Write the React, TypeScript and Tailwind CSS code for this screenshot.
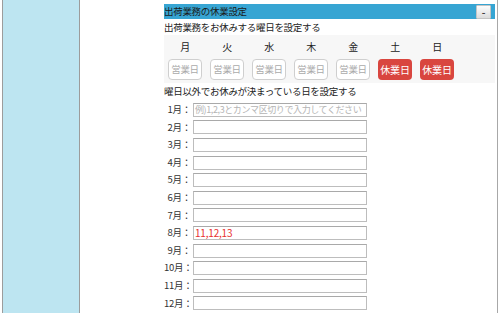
import React from 'react';

const days = ['月', '火', '水', '木', '金', '土', '日'];
const closed = [false, false, false, false, false, true, true];
const months = ['1月', '2月', '3月', '4月', '5月', '6月', '7月', '8月', '9月', '10月', '11月', '12月'];
const values: Record<string, string> = { '8月': '11,12,13' };

export default function App() {
  return (
    <div className="flex h-[313px] w-[500px] overflow-hidden bg-white font-['Noto_Sans_CJK_JP','Noto_Sans_CJK_SC',sans-serif] text-[9.5px] tracking-[-0.3px] text-[#333]">
      {/* left nav column */}
      <div className="ml-[2px] w-[78px] shrink-0 border-x border-[#9c9c9c] bg-[#bde5f1]" />

      <div className="ml-[84px] w-[334px] shrink-0 border-r border-[#a8a8a8] pr-[2px]">
        {/* panel header */}
        <div className="mt-[4px] flex h-[15px] items-center justify-between bg-[#37a5d3] pr-[4px]">
          <span className="whitespace-nowrap leading-[15px] text-[#1a1a1a]">出荷業務の休業設定</span>
          <button className="flex h-[14px] w-[15px] items-center justify-center rounded-[1px] border border-[#c4c4c4] bg-gradient-to-b from-[#fdfdfd] to-[#dcdcdc] text-[10px] font-bold leading-none text-[#444]">
            -
          </button>
        </div>

        <div className="h-[16px] whitespace-nowrap leading-[16px] text-[#222]">出荷業務をお休みする曜日を設定する</div>

        {/* weekday table */}
        <div className="h-[48px] bg-[#f7f7f7]">
          <div className="flex h-[22px] items-center pt-[1px]">
            {days.map((d) => (
              <div key={d} className="w-[42px] text-center text-[10px] text-[#222]">{d}</div>
            ))}
          </div>
          <div className="flex pt-[2px]">
            {days.map((d, i) => (
              <div key={d} className="flex w-[42px] justify-center">
                {closed[i] ? (
                  <span className="flex h-[21px] w-[34px] items-center justify-center whitespace-nowrap rounded-[4px] bg-[#d9463f] text-[10px] tracking-[-0.2px] text-white">
                    休業日
                  </span>
                ) : (
                  <span className="flex h-[21px] w-[34px] items-center justify-center whitespace-nowrap rounded-[4px] border border-[#cfcfcf] bg-white text-[9.5px] text-[#aaa]">
                    営業日
                  </span>
                )}
              </div>
            ))}
          </div>
        </div>

        <div className="mt-[1px] h-[14px] whitespace-nowrap leading-[14px] text-[#222]">曜日以外でお休みが決まっている日を設定する</div>

        {/* per-month holidays */}
        <div className="mt-[3px]">
          {months.map((m, i) => (
            <div key={m} className="flex h-[17.6px] items-center">
              <span className="w-[27px] whitespace-nowrap text-right leading-none text-[#333]">{m}：</span>
              <div className="ml-[2px] flex h-[14px] w-[174px] items-center overflow-hidden border border-[#bdbdbd] border-t-[#a9a9a9] bg-white px-[1px] leading-none">
                {i === 0 ? (
                  <span className="whitespace-nowrap text-[9px] tracking-[-0.4px] text-[#b4b4b4]">例)1,2,3とカンマ区切りで入力してください</span>
                ) : (
                  <span className="text-[10px] tracking-[-0.2px] text-[#e8302f]">{values[m] ?? ''}</span>
                )}
              </div>
            </div>
          ))}
        </div>
      </div>
    </div>
  );
}
